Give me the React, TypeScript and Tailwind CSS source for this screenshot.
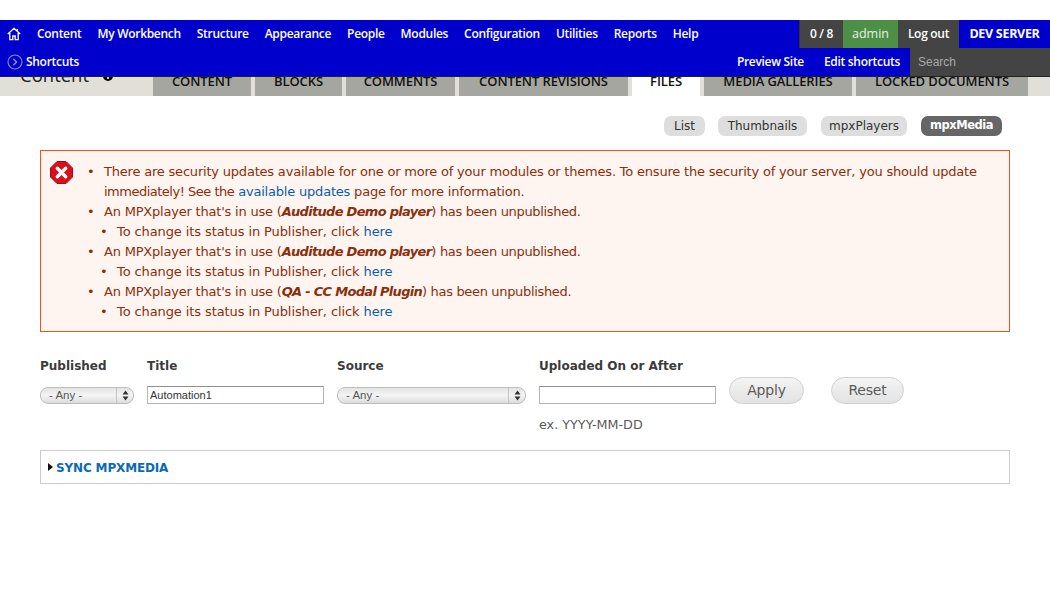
import React from "react";

const nav = ["Content", "My Workbench", "Structure", "Appearance", "People", "Modules", "Configuration", "Utilities", "Reports", "Help"];
const tabs: [string, string, boolean?][] = [
  ["CONTENT", "w-[98px]"],
  ["BLOCKS", "w-[87px]"],
  ["COMMENTS", "w-[109px]"],
  ["CONTENT REVISIONS", "w-[169px]"],
  ["FILES", "w-[68px]", true],
  ["MEDIA GALLERIES", "w-[148px]"],
  ["LOCKED DOCUMENTS", "w-[172px]"],
];
const tb = "font-['Open_Sans',sans-serif] text-[12px] font-semibold tracking-[-0.3px] text-white";
const dv = "font-['DejaVu_Sans',sans-serif]";

function Sub() {
  return (
    <ul className="ml-[13px]">
      <li className="flex leading-5 tracking-[-0.1px]">
        <span className="-ml-[2px] w-[17px] shrink-0">•</span>
        <span>To change its status in Publisher, click <a className="text-[#0a5ea8]">here</a></span>
      </li>
    </ul>
  );
}
function Item({ children }: { children: React.ReactNode }) {
  return (
    <li className="flex leading-5">
      <span className="-ml-[2px] w-[17px] shrink-0">•</span>
      <span>{children}</span>
    </li>
  );
}
function Strong({ children }: { children: React.ReactNode }) {
  return <b className="italic tracking-[-0.7px]">{children}</b>;
}
function Tail() {
  return <span className="tracking-[-0.33px]">) has been unpublished.</span>;
}
function Sel({ w }: { w: string }) {
  return (
    <div className={`${w} h-[17px] mt-px flex items-center rounded-[8px] border border-[#bdbdbd] bg-gradient-to-b from-[#e4e4e4] via-[#f4f4f4] to-[#dcdcdc] font-['Liberation_Sans',sans-serif] text-[11.5px] text-[#555]`}>
      <span className="flex-1 pl-[8px] leading-none">- Any -</span>
      <span className="w-[17px] h-full border-l border-[#c4c4c4] flex items-center justify-center">
        <svg width="7" height="11" viewBox="0 0 7 11"><path d="M3.5 0.5 6.5 4.5H.5ZM3.5 10.5 .5 6.5H6.5Z" fill="#333" /></svg>
      </span>
    </div>
  );
}
function Btn({ label, w }: { label: string; w: string }) {
  return (
    <div className={`${w} h-[27px] rounded-[14px] border border-[#d0d0d0] bg-gradient-to-b from-[#f4f4f4] to-[#e2e2e2] flex items-center justify-center ${dv} text-[14px] tracking-[-0.2px] text-[#5a5a5a]`}>{label}</div>
  );
}

export default function App() {
  return (
    <div className={`w-[1050px] h-[607px] overflow-hidden bg-white ${dv} text-[13px]`}>
      <div className="h-5" />
      <div className="relative z-10 h-[57px] bg-[#0000cc] border-b border-[#222]">
        <div className="flex h-[28px]">
          <div className="flex items-center w-[28px] justify-center">
            <svg width="14" height="14" viewBox="0 0 14 14" fill="none" stroke="#fff" strokeWidth="1.3"><path d="M.8 7 7 1.3 13.2 7M2.8 6v6.7h3V9h2.4v3.7h3V6" /><path d="M10.3 2v2" /></svg>
          </div>
          <div className={`flex items-center gap-[16px] pl-[9px] flex-1 ${tb}`}>
            {nav.map((n) => <span key={n}>{n}</span>)}
          </div>
          <div className={`w-[44px] bg-[#444] border-l border-[#333] flex items-center justify-center ${tb}`}>0 / 8</div>
          <div className={`w-[55px] bg-[#4d8f47] flex items-center justify-center font-['Open_Sans',sans-serif] text-[12.5px] text-[#e8f2e4]`}>admin</div>
          <div className={`w-[61px] bg-[#444] flex items-center justify-center ${tb}`}>Log out</div>
          <div className="w-[91px] flex items-center justify-center font-['Open_Sans',sans-serif] text-[12.5px] font-bold tracking-[-0.3px] text-white">DEV SERVER</div>
        </div>
        <div className="flex h-[28px]">
          <div className={`flex items-center pl-[7px] flex-1 ${tb}`}>
            <svg width="16" height="16" viewBox="0 0 16 16" fill="none" stroke="#8d8dc0" strokeWidth="1.1" className="mr-[3px]"><circle cx="8" cy="8" r="7" /><path d="M6.3 4.8 9.5 8l-3.2 3.2" strokeWidth="1.5" /></svg>
            <span>Shortcuts</span>
          </div>
          <div className={`flex items-center gap-[20px] pr-[10px] ${tb}`}>
            <span>Preview Site</span>
            <span>Edit shortcuts</span>
          </div>
          <div className="w-[140px] bg-[#444] flex items-center pl-[8px] font-['Liberation_Sans',sans-serif] text-[12px] text-[#a8a8a8]">Search</div>
        </div>
      </div>

      <div className="h-[19px] bg-[#e0e0d8] flex items-end overflow-hidden">
        <div className="w-[153px] shrink-0 h-full pl-[20px] text-[18.5px] leading-none text-[#222] font-['Open_Sans',sans-serif] flex gap-[14px] items-end">
          <span className="mb-[12px]">Content</span>
          <span className="mb-[15px] w-[10px] h-[10px] rounded-full bg-black flex items-center justify-center">
            <svg width="6" height="6" viewBox="0 0 6 6"><path d="M3 0v6M0 3h6" stroke="#fff" strokeWidth="1.5" /></svg>
          </span>
        </div>
        <div className="flex gap-[4px] h-full">
          {tabs.map(([t, w, active]) => (
            <div key={t} className={`${w} h-full flex items-center justify-center font-['Open_Sans',sans-serif] font-semibold text-[13px] tracking-[-0.1px] text-[#111] ${active ? "bg-white" : "bg-[#a6a6a0]"}`}>
              <span className="-mt-[9px]">{t}</span>
            </div>
          ))}
        </div>
      </div>

      <div className="flex justify-end pr-[48px] pt-[20px] text-[12px] text-[#333]">
        <span className="w-[41px] h-[20px] mr-[13px] rounded-[7px] bg-[#dedede] flex items-center justify-center">List</span>
        <span className="w-[89px] h-[20px] mr-[14px] rounded-[7px] bg-[#dedede] flex items-center justify-center">Thumbnails</span>
        <span className="w-[86px] h-[20px] mr-[14px] rounded-[7px] bg-[#dedede] flex items-center justify-center">mpxPlayers</span>
        <span className="w-[81px] h-[20px] rounded-[7px] bg-[#666] text-white font-bold text-[11.5px] tracking-[-0.5px] flex items-center justify-center">mpxMedia</span>
      </div>

      <div className="mx-[40px] mt-[14px] h-[182px] border border-[#ed541d] bg-[#fef5f1] text-[#8c2e0b] flex pt-[11px] text-[13px] tracking-[-0.2px]">
        <div className="w-[48px] shrink-0 pl-[9px]">
          <svg width="23" height="23" viewBox="0 0 23 23" className="-mt-px">
            <path d="M7 .5h9L22.5 7v9L16 22.5H7L.5 16V7Z" fill="#d8101c" stroke="#a50d16" />
            <path d="M7.3 7.3l8.4 8.4M15.7 7.3l-8.4 8.4" stroke="#fff" strokeWidth="3.4" strokeLinecap="round" />
          </svg>
        </div>
        <ul className="flex-1 pr-[20px]">
          <Item>There are security updates available for one or more of your modules or themes. To ensure the security of your server, you should update <span className="tracking-[-0.5px]">immediately! See the</span> <a className="text-[#0a5ea8]">available updates</a> page for more information.</Item>
          <Item>An MPXplayer that's in use (<Strong>Auditude Demo player</Strong><Tail /></Item>
          <Sub />
          <Item>An MPXplayer that's in use (<Strong>Auditude Demo player</Strong><Tail /></Item>
          <Sub />
          <Item>An MPXplayer that's in use (<Strong>QA - CC Modal Plugin</Strong><Tail /></Item>
          <Sub />
        </ul>
      </div>

      <div className="ml-[40px] mt-[24px] h-[94px] flex text-[12px] text-[#3b3b3b]">
        <div className="w-[107px]">
          <div className="h-[20px] leading-5 font-bold">Published</div>
          <div className="mt-[11px]"><Sel w="w-[94px]" /></div>
        </div>
        <div className="w-[190px]">
          <div className="h-[20px] leading-5 font-bold">Title</div>
          <div className="mt-[10px] w-[177px] h-[18px] border border-[#b5b5b5] border-t-[#8f8f8f] bg-white pl-[2px] leading-[16px] font-['Liberation_Sans',sans-serif] text-[11px] text-[#333]">Automation1</div>
        </div>
        <div className="w-[202px]">
          <div className="h-[20px] leading-5 font-bold">Source</div>
          <div className="mt-[11px]"><Sel w="w-[189px]" /></div>
        </div>
        <div className="w-[190px]">
          <div className="h-[20px] leading-5 font-bold">Uploaded On or After</div>
          <div className="mt-[10px] w-[177px] h-[18px] border border-[#b5b5b5] border-t-[#8f8f8f] bg-white" />
          <div className="mt-[11px] text-[12.75px] text-[#5a5a5a] leading-5">ex. YYYY-MM-DD</div>
        </div>
        <div className="pt-[21px] flex gap-[27px] items-start">
          <Btn label="Apply" w="w-[75px]" />
          <Btn label="Reset" w="w-[73px]" />
        </div>
      </div>

      <div className="mx-[40px] h-[34px] border border-[#ccc] flex items-center pl-[7px]">
        <svg width="5" height="8" viewBox="0 0 5 8" className="mr-[3px]"><path d="M0 0 5 4 0 8Z" fill="#111" /></svg>
        <span className="font-bold text-[12px] tracking-[-0.15px] text-[#0a6ab5] mt-px">SYNC MPXMEDIA</span>
      </div>
    </div>
  );
}
